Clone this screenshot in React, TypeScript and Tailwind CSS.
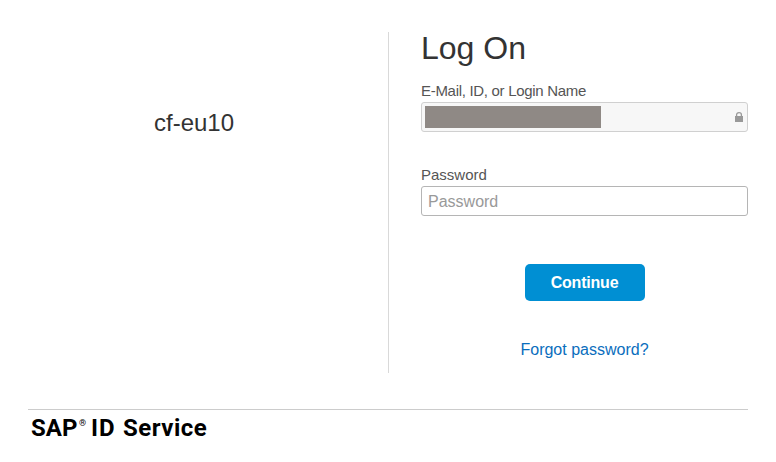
export default function App() {
  return (
    <main className="flex h-[462px] w-[776px] flex-col overflow-hidden bg-white px-7 pt-8 font-['Liberation_Sans',Arial,sans-serif] text-[#333]">
      <div className="flex h-[341px]">
        <section className="w-[361px] border-r border-[#d9d9d9] pr-7 pt-[75px] text-center">
          <h2 className="text-2xl leading-8">cf-eu10</h2>
        </section>
        <form className="flex flex-1 flex-col pl-8">
          <h1 className="h-[50px] text-[32px] leading-[32px]">Log On</h1>
          <label className="h-5 text-[15px] leading-[18px] tracking-[-0.3px] text-[#555]">E-Mail, ID, or Login Name</label>
          <div className="flex h-[30px] w-[327px] items-center justify-between rounded-[3px] border border-[#d0d0d0] bg-[#f7f7f7] pl-[3px] pr-1">
            <div className="h-[22px] w-[176px] bg-[#8f8985]" />
            <svg width="8" height="10" viewBox="0 0 8 10" fill="none">
              <path d="M1.6 4V2.8C1.6 1.5 2.5.7 4 .7s2.4.8 2.4 2.1V4" stroke="#999" strokeWidth="1.3" />
              <rect y="4" width="8" height="6" fill="#999" />
            </svg>
          </div>
          <label htmlFor="password" className="mt-[34px] h-5 text-[15px] leading-[18px] text-[#555]">Password</label>
          <input id="password" type="password" placeholder="Password" className="h-[30px] w-[327px] rounded-[3px] border border-[#b5b5b5] px-1.5 pt-0.5 text-base placeholder:text-[#999]" />
          <button type="button" className="mt-12 h-[37px] w-[120px] self-center rounded-[5px] bg-[#008fd3] text-base font-bold tracking-[-0.2px] text-white">Continue</button>
          <a href="#" className="mt-[37px] self-center text-base leading-6 text-[#0a6ebd]">Forgot password?</a>
        </form>
      </div>
      <footer className="mt-9 border-t border-[#ccc] pl-[3px] pt-[3px]">
        <div className="flex font-['Roboto',sans-serif] text-2xl font-bold leading-[30px] text-black">
          <span className="w-[48px]">SAP</span>
          <sup className="top-0 w-[12px] pt-[5px] text-[9px] font-normal leading-[10px]">®</sup>
          <span className="w-[32px] whitespace-nowrap tracking-[1px]">ID</span>
          <span className="tracking-[0.5px]">Service</span>
        </div>
      </footer>
    </main>
  );
}
